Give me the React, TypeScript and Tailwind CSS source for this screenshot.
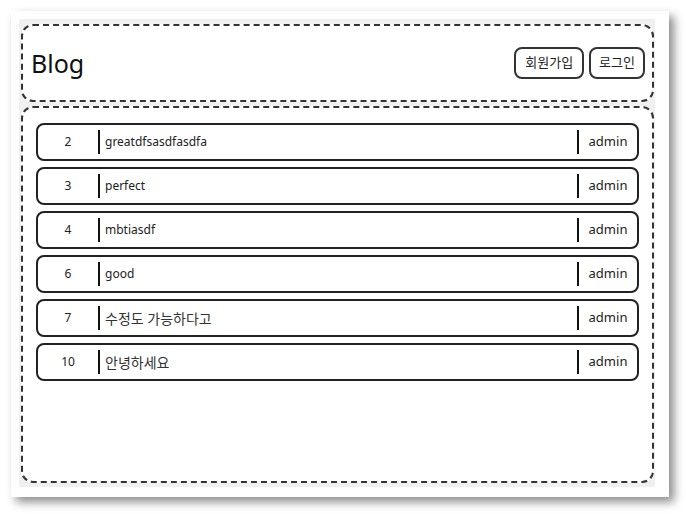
import React from "react";

const rows = [
  { id: 2, title: "greatdfsasdfasdfa", author: "admin" },
  { id: 3, title: "perfect", author: "admin" },
  { id: 4, title: "mbtiasdf", author: "admin" },
  { id: 6, title: "good", author: "admin" },
  { id: 7, title: "수정도 가능하다고", author: "admin" },
  { id: 10, title: "안녕하세요", author: "admin" },
];

const font = { fontFamily: '"Noto Sans", "Noto Sans CJK KR", sans-serif' };

export default function App() {
  return (
    <div className="w-[686px] h-[514px] bg-white overflow-hidden pt-[11px] pl-[11px]" style={font}>
      <div className="w-[658px] h-[486px] bg-white shadow-[5px_5px_9px_rgba(0,0,0,0.45)] pt-[8px] pl-[8px]">
        <div className="w-[636px] h-[468px] bg-[#f0f0f0] pt-[5px] pl-[2px] flex flex-col gap-[4px]">
          <header className="w-[633px] h-[78px] bg-white border-2 border-dashed border-[#333] rounded-[12px] flex items-center justify-between pl-[8px] pr-[7px]">
            <h1 className="text-[25px] text-[#111] leading-none">Blog</h1>
            <div className="flex gap-[5px]">
              <button className="h-[32px] px-[9px] border-2 border-[#333] rounded-[8px] text-[13px] text-[#222] bg-white">회원가입</button>
              <button className="h-[32px] px-[8px] border-2 border-[#333] rounded-[8px] text-[13px] text-[#222] bg-white">로그인</button>
            </div>
          </header>
          <main className="w-[633px] h-[377px] bg-white border-2 border-dashed border-[#333] rounded-[12px] pt-[15px] px-[13px] flex flex-col gap-[6px]">
            {rows.map((r) => {
              const korean = /[가-힣]/.test(r.title);
              return (
                <div key={r.id} className="h-[38px] border-2 border-[#222] rounded-[8px] flex items-center text-[12px] text-[#222]">
                  <div className="w-[60px] text-center">{r.id}</div>
                  <div className="w-[2px] h-[24px] bg-[#111]" />
                  <div className={korean ? "flex-1 pl-[5px] text-[14px] text-[#333]" : "flex-1 pl-[5px]"}>{r.title}</div>
                  <div className="w-[2px] h-[24px] bg-[#111]" />
                  <div className="w-[58px] text-center text-[13px]">{r.author}</div>
                </div>
              );
            })}
          </main>
        </div>
      </div>
    </div>
  );
}
